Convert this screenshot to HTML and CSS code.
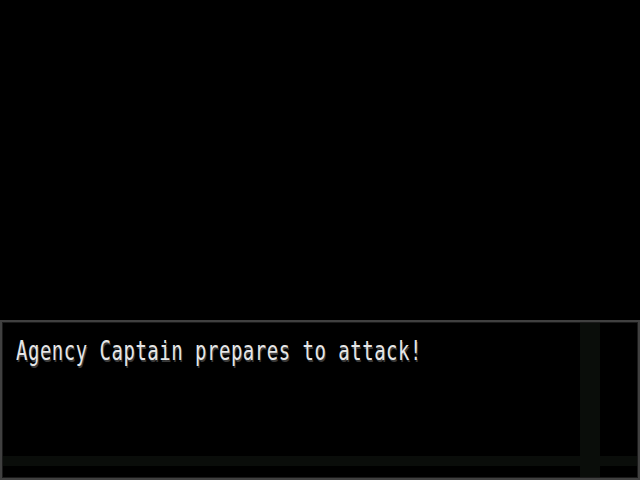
FILE: index.html
```html
<!DOCTYPE html>
<html lang="en">
  <head>
    <meta charset="UTF-8" />
    <title>Battle</title>
    <link rel="stylesheet" href="styles.css">
  </head>
  <body>
    <div class="screen">
      <div class="field"></div>
      <div class="message-box">
        <span class="message">Agency Captain prepares to attack!</span>
      </div>
    </div>
  </body>
</html>
```

FILE: styles.css
```css
body {
  margin: 0;
  background: #000;
}
.screen {
  width: 640px;
  height: 480px;
  display: flex;
  flex-direction: column;
}
.field {
  flex: 1;
}
.message-box {
  height: 160px;
  box-sizing: border-box;
  border: 2px solid #404040;
  box-shadow: inset 0 0 0 1px #1a1a1a;
  background:
    linear-gradient(#0a0d0a, #0a0d0a) 578px 0 / 20px 100% no-repeat,
    linear-gradient(#0a0d0a, #0a0d0a) 0 134px / 100% 10px no-repeat,
    #000;
  padding: 14px 0 0 14px;
}
.message {
  display: inline-block;
  font-family: "DejaVu Sans Mono", monospace;
  font-size: 19px;
  line-height: 20px;
  letter-spacing: 0.5px;
  color: #e6e6e6;
  text-shadow: 1px 1px 0 #3a3a3a;
  transform: scaleY(1.44);
  transform-origin: top left;
}
```
